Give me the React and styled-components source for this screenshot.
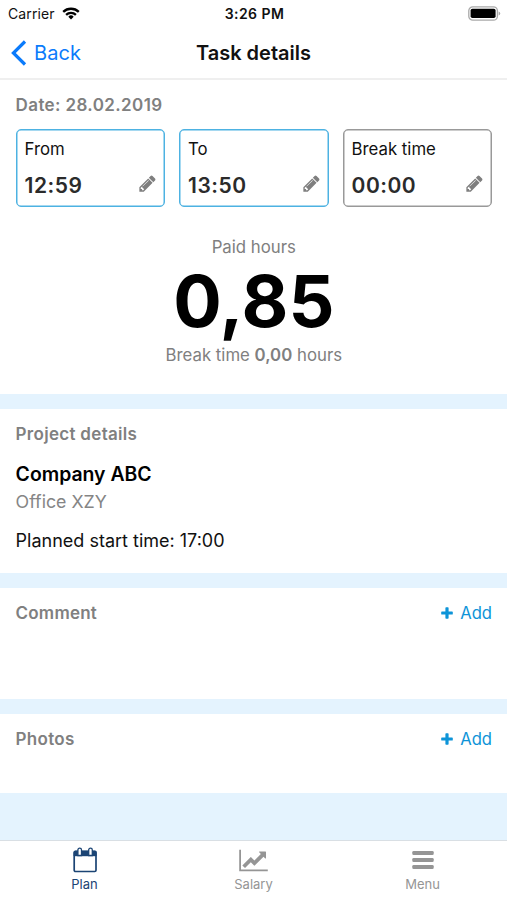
import styled, { createGlobalStyle } from 'styled-components';

const GlobalStyle = createGlobalStyle`
  * {
    margin: 0;
    padding: 0;
    box-sizing: border-box;
  }

  body {
    background: #fff;
    color: #111;
    font-family: Inter, 'Liberation Sans', sans-serif;
  }

  svg {
    display: block;
    flex: none;
  }
`;

function WifiIcon() {
  return (
    <svg width="18" height="13" viewBox="0 0 18 13" fill="none" stroke="#000" strokeWidth="2.3">
      <path d="M1.2 4.9 a11.2 11.2 0 0 1 15.6 0" />
      <path d="M4.1 7.9 a7 7 0 0 1 9.8 0" />
      <path d="M9 12.4 L6.3 9.7 a3.8 3.8 0 0 1 5.4 0 Z" fill="#000" stroke="none" />
    </svg>
  );
}

function BatteryIcon() {
  return (
    <svg width="33" height="15" viewBox="0 0 33 15">
      <rect x="0.8" y="0.8" width="28.6" height="13.4" rx="4" fill="#fff" stroke="#a9a9a9" strokeWidth="1.3" />
      <rect x="2.6" y="2.7" width="25" height="9.4" rx="1.8" fill="#000" />
      <path d="M30.6 5.5 q1.6 0.5 1.6 2 t-1.6 2 z" fill="#a9a9a9" />
    </svg>
  );
}

function BackIcon() {
  return (
    <svg width="16" height="26" viewBox="0 0 16 26" fill="none" stroke="#0b7bfb" strokeWidth="3.2">
      <path d="M14 1.5 L2.4 13 L14 24.5" />
    </svg>
  );
}

function PencilIcon() {
  return (
    <svg width="19" height="19" viewBox="0 0 1792 1792" fill="#7f7f7f">
      <path d="M491 1536l91-91-235-235-91 91v107h128v128h107zM1014 608q0-22-22-22-10 0-17 7l-542 542q-7 7-7 17 0 22 22 22 10 0 17-7l542-542q7-7 7-17zM960 416l416 416-832 832h-416v-416zM1643 512q0 53-37 90l-166 166-416-416 166-165q36-38 90-38 53 0 91 38l235 234q37 39 37 91z" />
    </svg>
  );
}

function PlusIcon() {
  return (
    <svg width="12" height="12" viewBox="0 0 12 12" fill="#0d94d8">
      <path d="M5.1 0.2 h1.8 q0.7 0 0.7 0.7 v3.5 h3.5 q0.7 0 0.7 0.7 v1.8 q0 0.7 -0.7 0.7 h-3.5 v3.5 q0 0.7 -0.7 0.7 h-1.8 q-0.7 0 -0.7 -0.7 v-3.5 h-3.5 q-0.7 0 -0.7 -0.7 v-1.8 q0 -0.7 0.7 -0.7 h3.5 v-3.5 q0 -0.7 0.7 -0.7 z" />
    </svg>
  );
}

function CalendarIcon() {
  return (
    <svg width="24" height="26" viewBox="0 0 24 26">
      <rect x="1.2" y="4.5" width="21.8" height="20" rx="1.3" fill="#fff" stroke="#1b4474" strokeWidth="1.7" />
      <path d="M0.6 9 V5 q0 -1.5 1.5 -1.500 h20 q1.500 0 1.500 1.500 V9 z" fill="#1b4474" />
      <path d="M4.900 8.500 V3 a1.800 1.800 0 0 1 3.600 0 V8.500 z" fill="#fff" stroke="#1b4474" strokeWidth="1.300" />
      <path d="M15.700 8.500 V3 a1.800 1.800 0 0 1 3.600 0 V8.500 z" fill="#fff" stroke="#1b4474" strokeWidth="1.300" />
      <path d="M1 8.600 h22" stroke="#1b4474" strokeWidth="1.200" />
    </svg>
  );
}

function ChartIcon() {
  return (
    <svg width="29" height="25" viewBox="0 0 2048 1792" fill="#959595">
      <path d="M2048 1536v128h-2048v-1536h128v1408h1920zM1920 288v435q0 21-19.500 29.500t-35.500-7.500l-121-121-633 633q-10 10-23 10t-23-10l-233-233-416 416-192-192 585-585q10-10 23-10t23 10l233 233 464-464-121-121q-16-16-7.500-35.500t29.500-19.500h435q14 0 23 9t9 23z" />
    </svg>
  );
}

function MenuIcon() {
  return (
    <svg width="22" height="20" viewBox="0 0 22 20" fill="#959595">
      <rect x="0.3" y="1" width="21.4" height="4" rx="1.3" />
      <rect x="0.3" y="8" width="21.4" height="4" rx="1.3" />
      <rect x="0.3" y="15" width="21.4" height="4" rx="1.3" />
    </svg>
  );
}

function AddLink() {
  return (
    <AddButton>
      <PlusIcon />
      Add
    </AddButton>
  );
}

const times = [
  { label: 'From', value: '12:59', active: true },
  { label: 'To', value: '13:50', active: true },
  { label: 'Break time', value: '00:00', active: false },
];

function App() {
  return (
    <Screen>
      <GlobalStyle />
      <StatusBar>
        <Carrier>
          Carrier
          <WifiIcon />
        </Carrier>
        <Clock>3:26 PM</Clock>
        <BatteryIcon />
      </StatusBar>
      <NavBar>
        <BackButton>
          <BackIcon />
          Back
        </BackButton>
        <Title>Task details</Title>
      </NavBar>

      <Section $height={314}>
        <Heading $spacing="0.38px">Date: 28.02.2019</Heading>
        <TimeRow>
          {times.map((t) => (
            <TimeBox key={t.label} $active={t.active}>
              <TimeLabel>{t.label}</TimeLabel>
              <TimeValue>
                {t.value}
                <PencilIcon />
              </TimeValue>
            </TimeBox>
          ))}
        </TimeRow>
        <Summary>
          <Caption>Paid hours</Caption>
          <Hours>0,85</Hours>
          <Caption>
            Break time <b>0,00</b> hours
          </Caption>
        </Summary>
      </Section>

      <Section $height={164}>
        <Heading $spacing="0.3px">Project details</Heading>
        <Company>Company ABC</Company>
        <Office>Office XZY</Office>
        <Planned>Planned start time: 17:00</Planned>
      </Section>

      <Section $height={111}>
        <Heading $spacing="0.2px">Comment</Heading>
        <AddLink />
      </Section>

      <Section $height={79}>
        <Heading $spacing="0.3px">Photos</Heading>
        <AddLink />
      </Section>

      <TabBar>
        <Tab $active>
          <TabIcon><CalendarIcon /></TabIcon>
          Plan
        </Tab>
        <Tab>
          <TabIcon><ChartIcon /></TabIcon>
          Salary
        </Tab>
        <Tab>
          <TabIcon><MenuIcon /></TabIcon>
          Menu
        </Tab>
      </TabBar>
    </Screen>
  );
}

const Screen = styled.div`
  display: flex;
  flex-direction: column;
  width: 507px;
  height: 900px;
  overflow: hidden;
  background: #e4f3fe;
`;

const StatusBar = styled.header`
  display: grid;
  grid-template-columns: 1fr auto 1fr;
  align-items: center;
  height: 27px;
  padding: 0 6px 0 8px;
  background: #fff;

  > svg {
    justify-self: end;
  }
`;

const Carrier = styled.div`
  display: flex;
  align-items: center;
  gap: 7px;
  font-size: 14px;
  letter-spacing: 0.1px;
`;

const Clock = styled.div`
  font-size: 14px;
  font-weight: 600;
  letter-spacing: 0.45px;
`;

const NavBar = styled.nav`
  display: grid;
  grid-template-columns: 1fr auto 1fr;
  align-items: center;
  height: 53px;
  padding: 0 11px;
  border-bottom: 2px solid #efefef;
  background: #fff;
`;

const BackButton = styled.a`
  display: flex;
  align-items: center;
  gap: 7px;
  color: #0b7bfb;
  font-size: 20px;
  letter-spacing: 0.1px;
`;

const Title = styled.h1`
  font-size: 20px;
  font-weight: 600;
`;

const Section = styled.section`
  display: flex;
  flex-wrap: wrap;
  align-content: flex-start;
  justify-content: space-between;
  flex: none;
  height: ${(p) => p.$height}px;
  padding: 14px 15px 0 15.6px;
  margin-bottom: 15px;
  background: #fff;

  &:last-of-type {
    margin-bottom: 0;
  }
`;

const Heading = styled.h2`
  color: #808080;
  font-size: 17px;
  font-weight: 600;
  line-height: 22px;
  letter-spacing: ${(p) => p.$spacing || 'normal'};
`;

const TimeRow = styled.div`
  display: grid;
  grid-template-columns: repeat(3, 1fr);
  gap: 14px;
  width: 100%;
  margin-top: 13px;
`;

const TimeBox = styled.div`
  height: 78px;
  padding: 8px 7px 0 8px;
  border: 1px solid ${(p) => (p.$active ? '#4db2e2' : '#999')};
  border-radius: 5px;
  box-shadow: inset 0 0 0 0.5px ${(p) => (p.$active ? '#4db2e2' : '#999')};
`;

const TimeLabel = styled.div`
  font-size: 16.8px;
  line-height: 22px;
`;

const TimeValue = styled.div`
  display: flex;
  align-items: center;
  justify-content: space-between;
  margin-top: 14px;
  color: #2b2b2b;
  font-size: 21px;
  font-weight: 600;
  line-height: 24px;
  letter-spacing: 0.5px;

  svg {
    margin-top: -6px;
  }
`;

const Summary = styled.div`
  width: 100%;
  margin-top: 29px;
  text-align: center;
`;

const Caption = styled.p`
  color: #808080;
  font-size: 16.8px;
  line-height: 22px;

  b {
    font-weight: 600;
  }
`;

const Hours = styled.div`
  height: 86px;
  color: #000;
  font-size: 72px;
  font-weight: 700;
  line-height: 86px;
`;

const Company = styled.h3`
  width: 100%;
  margin-top: 16px;
  color: #000;
  font-size: 19.4px;
  font-weight: 600;
  line-height: 26px;
`;

const Office = styled.p`
  width: 100%;
  margin-top: 3px;
  color: #858585;
  font-size: 17.8px;
  line-height: 24px;
`;

const Planned = styled.p`
  width: 100%;
  margin-top: 15px;
  font-size: 18px;
  line-height: 24px;
`;

const AddButton = styled.a`
  display: flex;
  align-items: center;
  gap: 7px;
  color: #0d94d8;
  font-size: 16.6px;
  line-height: 22px;
`;

const TabBar = styled.footer`
  display: grid;
  grid-template-columns: repeat(3, 1fr);
  flex: none;
  height: 60px;
  margin-top: auto;
  border-top: 1px solid #d9dfe4;
  background: #fff;
`;

const Tab = styled.a`
  display: flex;
  flex-direction: column;
  align-items: center;
  padding-top: 6px;
  color: ${(p) => (p.$active ? '#1b4474' : '#959595')};
  font-size: 13px;
  line-height: 18px;
`;

const TabIcon = styled.span`
  display: flex;
  align-items: center;
  height: 26px;
  margin-bottom: 2px;
`;

export default App;
